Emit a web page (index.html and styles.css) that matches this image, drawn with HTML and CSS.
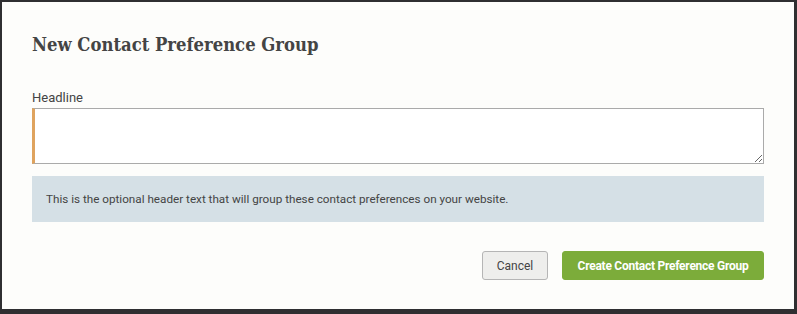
FILE: index.html
```html
<!DOCTYPE html>
<html lang="en">
<head>
  <meta charset="UTF-8">
  <title>New Contact Preference Group</title>
  <link rel="stylesheet" href="styles.css">
</head>
<body>
  <div class="modal">
    <h2 class="modal-title">New Contact Preference Group</h2>

    <label class="field-label" for="headline">Headline</label>
    <textarea class="field-input" id="headline"></textarea>

    <div class="help-box">This is the optional header text that will group these contact preferences on your website.</div>

    <div class="modal-actions">
      <button class="btn btn-cancel">Cancel</button>
      <button class="btn btn-primary">Create Contact Preference Group</button>
    </div>
  </div>
</body>
</html>
```

FILE: styles.css
```css
* { margin: 0; padding: 0; box-sizing: border-box; }
html, body { height: 100%; }
body {
  background: #2f2f31;
  padding: 2px 3px 5px 2px;
  font-family: Roboto, "Liberation Sans", sans-serif;
}
.modal {
  height: 307px;
  background: #fdfdfb;
  padding: 29px 30px 0 30px;
}
.modal-title {
  font-family: "DejaVu Serif", "Liberation Serif", serif;
  font-size: 18.3px;
  font-stretch: condensed;
  font-weight: bold;
  color: #444;
  line-height: 27px;
}
.field-label {
  display: block;
  margin-top: 32px;
  font-size: 13px;
  font-weight: 400;
  color: #444;
  line-height: 16px;
}
.field-input {
  display: block;
  width: 100%;
  height: 56px;
  margin-top: 2px;
  border: 1px solid #aaa;
  border-left: 3px solid #dfa35e;
  background: #fff;
  resize: vertical;
  font-family: inherit;
}
.help-box {
  margin-top: 12px;
  height: 46px;
  background: #d5e0e6;
  padding: 0 14px;
  display: flex;
  align-items: center;
  font-size: 11.7px;
  color: #444;
}
.modal-actions {
  margin-top: 29px;
  display: flex;
  justify-content: flex-end;
  gap: 14px;
}
.btn {
  height: 29px;
  border-radius: 3px;
  font-family: inherit;
  font-size: 12px;
  cursor: pointer;
}
.btn-cancel {
  width: 66px;
  background: #eeeeec;
  border: 1px solid #b5b5b5;
  color: #444;
}
.btn-primary {
  width: 202px;
  background: #7cac3a;
  border: 1px solid #7cac3a;
  color: #fff;
  font-weight: bold;
  letter-spacing: -0.25px;
}
```
